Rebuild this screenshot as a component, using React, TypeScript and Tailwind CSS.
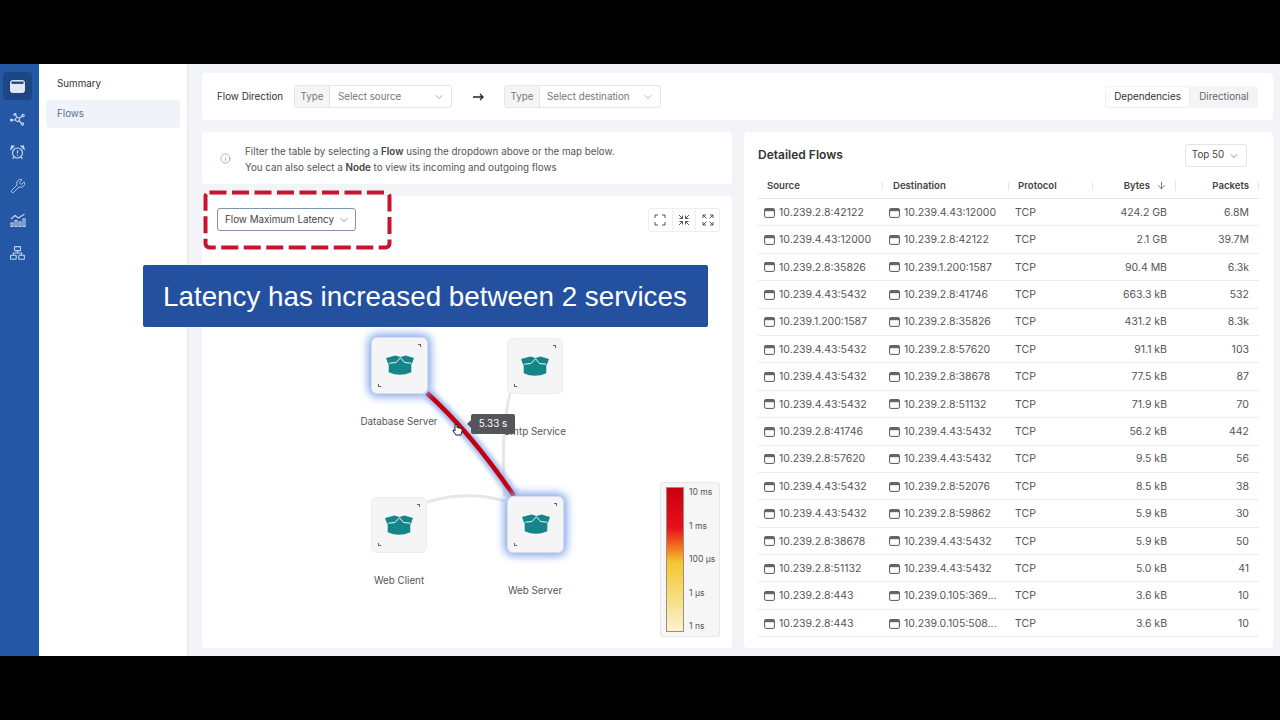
import React from "react";
import { ChevronDown, ArrowDown, Info, Wrench } from "lucide-react";

const rows: [string, string, string, string][] = [
  ["10.239.2.8:42122", "10.239.4.43:12000", "424.2 GB", "6.8M"],
  ["10.239.4.43:12000", "10.239.2.8:42122", "2.1 GB", "39.7M"],
  ["10.239.2.8:35826", "10.239.1.200:1587", "90.4 MB", "6.3k"],
  ["10.239.4.43:5432", "10.239.2.8:41746", "663.3 kB", "532"],
  ["10.239.1.200:1587", "10.239.2.8:35826", "431.2 kB", "8.3k"],
  ["10.239.4.43:5432", "10.239.2.8:57620", "91.1 kB", "103"],
  ["10.239.4.43:5432", "10.239.2.8:38678", "77.5 kB", "87"],
  ["10.239.4.43:5432", "10.239.2.8:51132", "71.9 kB", "70"],
  ["10.239.2.8:41746", "10.239.4.43:5432", "56.2 kB", "442"],
  ["10.239.2.8:57620", "10.239.4.43:5432", "9.5 kB", "56"],
  ["10.239.4.43:5432", "10.239.2.8:52076", "8.5 kB", "38"],
  ["10.239.4.43:5432", "10.239.2.8:59862", "5.9 kB", "30"],
  ["10.239.2.8:38678", "10.239.4.43:5432", "5.9 kB", "50"],
  ["10.239.2.8:51132", "10.239.4.43:5432", "5.0 kB", "41"],
  ["10.239.2.8:443", "10.239.0.105:369...", "3.6 kB", "10"],
  ["10.239.2.8:443", "10.239.0.105:508...", "3.6 kB", "10"],
];

function WinIcon() {
  return (
    <svg width="11" height="10" viewBox="0 0 11 10" fill="none" className="shrink-0">
      <rect x="0.6" y="0.6" width="9.8" height="8.8" rx="1.2" stroke="#555" strokeWidth="1" />
      <rect x="0.6" y="0.6" width="9.8" height="2.6" fill="#666" />
    </svg>
  );
}

function Box() {
  return (
    <svg width="28" height="21" viewBox="0 0 28 21">
      <path d="M0 3 L9.5 0.5 L14.5 2 L19.5 0.5 L28 3 L26 8.5 L25.3 8.8 V17.2 Q14 22.5 2.7 17.2 V8.8 L2 8.5 Z" fill="#14868a" />
      <path d="M3.3 8.2 L10 7.5 L14.5 2.7 L18.5 7.5 L25 8.2" fill="none" stroke="#f5f5f7" strokeWidth="1" />
    </svg>
  );
}

function Node({ x, y, w, label, lx, ly, active }: { x: number; y: number; w: number; label: string; lx: number; ly: number; active?: boolean }) {
  return (
    <>
      <div
        className={
          active
            ? "absolute flex items-center justify-center rounded-md bg-[#f5f5f7] border border-[#d5dcec] shadow-[0_0_8px_3px_#86a8e8]"
            : "absolute flex items-center justify-center rounded-md bg-[#f5f5f7] border border-[#ececee]"
        }
        style={{ left: x, top: y, width: w, height: w }}
      >
        <Box />
        <span className="absolute right-[6px] top-[6px] w-[3px] h-[3px] border-t border-r border-[#666]" />
        <span className="absolute left-[6px] bottom-[6px] w-[3px] h-[3px] border-b border-l border-[#666]" />
      </div>
      <div className="absolute text-[9.8px] leading-[14px] text-[#555] whitespace-nowrap -translate-x-1/2" style={{ left: lx, top: ly }}>
        {label}
      </div>
    </>
  );
}

function ActionIcon({ kind }: { kind: number }) {
  const paths = [
    "M1 4V1H4M8 1H11V4M11 8V11H8M4 11H1V8",
    "M1 1L4.5 4.5M4.5 1.5V4.5H1.5M11 1L7.5 4.5M7.5 1.5V4.5H10.5M1 11L4.5 7.5M4.5 10.5V7.5H1.5M11 11L7.5 7.5M7.5 10.5V7.5H10.5",
    "M4.5 4.5L1 1M1 4V1H4M7.5 4.5L11 1M8 1H11V4M4.5 7.5L1 11M1 8V11H4M7.5 7.5L11 11M8 11H11V8",
  ];
  return (
    <svg width="12" height="12" viewBox="0 0 12 12" fill="none" stroke="#555" strokeWidth="1">
      <path d={paths[kind]} />
    </svg>
  );
}

function SideIcon({ children, active }: { children: React.ReactNode; active?: boolean }) {
  return (
    <div className={active ? "ml-[3px] w-[29px] h-[28px] rounded bg-[#1d4684] flex items-center justify-center" : "ml-[3px] w-[29px] h-[28px] flex items-center justify-center"}>
      {children}
    </div>
  );
}

const rowStyle = "flex items-center h-[27.4px] pt-[1px] border-b border-[#e9ebef] text-[10.5px] text-[#555]";
const ICON = "#c3d4f2";

export default function App() {
  return (
    <div className="h-[720px] w-[1280px] bg-black pt-[64px] overflow-hidden" style={{ fontFamily: "Inter, 'Noto Sans', sans-serif" }}>
      <div className="relative h-[592px] flex bg-[#f3f4f7]">
        <aside className="w-[39px] bg-[#2558a4] flex flex-col pt-[8px] gap-[5.4px] shrink-0">
          <SideIcon active>
            <svg width="15" height="13" viewBox="0 0 15 13">
              <rect x="0.7" y="0.7" width="13.6" height="11.6" rx="1.5" fill="#dfe8f7" stroke="#fff" strokeWidth="1" />
              <rect x="1.5" y="1.5" width="12" height="2.4" fill="#1d4684" />
            </svg>
          </SideIcon>
          <SideIcon>
            <svg width="15" height="13" viewBox="0 0 15 13" fill="none" stroke={ICON} strokeWidth="1.2">
              <circle cx="7.5" cy="6.5" r="2" />
              <circle cx="1.5" cy="7" r="1" fill={ICON} />
              <circle cx="5" cy="1.5" r="1" />
              <circle cx="13" cy="2.5" r="1.2" />
              <circle cx="12.5" cy="11" r="1.2" />
              <path d="M2.5 7H5.5M6 2.5L7 4.5M9.2 5.3L12 3.3M9 8L11.5 10.2" />
            </svg>
          </SideIcon>
          <SideIcon>
            <svg width="15" height="15" viewBox="0 0 15 15" fill="none" stroke={ICON} strokeWidth="1.2">
              <circle cx="7.5" cy="8" r="5" />
              <path d="M7.5 5.2V8.6M7.5 9.8V10.8" />
              <path d="M1 4L3.8 1.2L1.6 0.9ZM14 4L11.2 1.2L13.4 0.9Z" />
              <path d="M3.8 12L2.6 14M11.2 12L12.4 14" />
            </svg>
          </SideIcon>
          <SideIcon><Wrench size={16} color={ICON} strokeWidth={1.3} /></SideIcon>
          <SideIcon>
            <svg width="16" height="14" viewBox="0 0 16 14" fill="none" stroke={ICON} strokeWidth="1.1">
              <path d="M1 6L5 2.5L8.5 5L14.5 1" />
              <rect x="1" y="10" width="2" height="3.5" />
              <rect x="5" y="7.5" width="2" height="6" />
              <rect x="9" y="9" width="2" height="4.5" />
              <rect x="13" y="6" width="2" height="7.5" />
            </svg>
          </SideIcon>
          <SideIcon>
            <svg width="15" height="14" viewBox="0 0 15 14" fill="none" stroke={ICON} strokeWidth="1.1">
              <rect x="4.5" y="0.6" width="6" height="4" rx="0.5" />
              <rect x="0.6" y="9.2" width="5.6" height="4" rx="0.5" />
              <rect x="8.8" y="9.2" width="5.6" height="4" rx="0.5" />
              <path d="M7.5 4.6V7H3.4V9.2M7.5 7H11.6V9.2" />
            </svg>
          </SideIcon>
        </aside>

        <nav className="w-[149px] bg-white border-r border-[#e6e8ec] px-[7px] shrink-0 text-[9.8px]">
          <div className="h-[36px] flex items-center pl-[11px] pt-[5px] text-[#333]">Summary</div>
          <div className="h-[28px] flex items-center pl-[11px] rounded bg-[#f0f3fa] text-[#5c7091]">Flows</div>
        </nav>

        <main className="w-[1086px] pl-[14px] pt-[9px] flex flex-col gap-[12px]">
          <div className="h-[47px] w-[1071px] bg-white flex items-center pl-[15px] pr-[15px] text-[9.8px] rounded-sm shrink-0">
            <span className="text-[#333] w-[77px] pt-[2px]">Flow Direction</span>
            <div className="flex h-[23px] w-[158px] rounded-[3px] border border-[#e3e5ea] text-[#777]">
              <span className="w-[35px] pt-[2px] bg-[#f5f5f7] border-r border-[#e3e5ea] flex items-center justify-center">Type</span>
              <span className="flex-1 flex items-center justify-between pl-[8px] pr-[6px]"><span className="pt-[1px]">Select source</span> <ChevronDown size={12} strokeWidth={1.2} /></span>
            </div>
            <svg className="ml-[21px]" width="11" height="8" viewBox="0 0 11 8" fill="none" stroke="#222" strokeWidth="1.3"><path d="M0 4H10M7 1L10 4L7 7" /></svg>
            <div className="ml-[20px] flex h-[23px] w-[157px] rounded-[3px] border border-[#e3e5ea] text-[#777]">
              <span className="w-[35px] pt-[2px] bg-[#f5f5f7] border-r border-[#e3e5ea] flex items-center justify-center">Type</span>
              <span className="flex-1 flex items-center justify-between pl-[7px] pr-[6px]"><span className="pt-[1px]">Select destination</span> <ChevronDown size={12} strokeWidth={1.2} /></span>
            </div>
            <div className="ml-auto flex h-[22px] bg-[#f3f4f6] rounded-[3px]">
              <span className="w-[85px] pt-[1px] bg-white border border-[#f0f1f3] rounded-[3px] flex items-center justify-center text-[#333]">Dependencies</span>
              <span className="w-[68px] pt-[1px] flex items-center justify-center text-[#666]">Directional</span>
            </div>
          </div>

          <div className="flex gap-[12px] flex-1 pb-[8px] min-h-0">
            <div className="w-[530px] flex flex-col gap-[12px]">
              <div className="h-[52px] bg-white rounded-sm flex items-center pl-[18px] text-[9.8px] leading-[16px] text-[#555] shrink-0">
                <Info size={11} color="#5a7fb5" strokeWidth={1.2} className="shrink-0" />
                <div className="ml-[14px] pt-[3px]">
                  <div>Filter the table by selecting a <b className="font-semibold text-[#444]">Flow</b> using the dropdown above or the map below.</div>
                  <div>You can also select a <b className="font-semibold text-[#444]">Node</b> to view its incoming and outgoing flows</div>
                </div>
              </div>

              <div className="relative flex-1 bg-white rounded-sm">
                <div className="absolute left-[15px] top-[12px] w-[139px] h-[23px] rounded-[3px] border border-[#7f93ad] flex items-center justify-between pl-[7px] pr-[5px] text-[9.8px] text-[#444] whitespace-nowrap">
                  <span className="pt-[1px]">Flow Maximum Latency</span> <ChevronDown size={12} strokeWidth={1.2} />
                </div>
                <div className="absolute left-[446px] top-[12px] h-[24px] w-[72px] flex border border-[#eceef1] rounded-[3px]">
                  <span className="flex-1 flex items-center justify-center border-r border-[#eceef1]"><ActionIcon kind={0} /></span>
                  <span className="flex-1 flex items-center justify-center border-r border-[#eceef1]"><ActionIcon kind={1} /></span>
                  <span className="flex-1 flex items-center justify-center"><ActionIcon kind={2} /></span>
                </div>

                <svg className="absolute left-0 top-0" width="530" height="452" fill="none">
                  <path d="M308 197 Q 298 240 303 300" stroke="#e6e6e6" strokeWidth="3" />
                  <path d="M225 306 Q 265 294 303 305" stroke="#e6e6e6" strokeWidth="3" />
                  <path className="blur-[2px]" d="M225 197 Q 270 238 312 300" stroke="#7ea3ec" strokeWidth="11" opacity="0.7" />
                  <path d="M225 197 Q 270 238 312 300" stroke="#c4000f" strokeWidth="4.5" />
                </svg>

                <Node x={169} y={141} w={57} label="Database Server" lx={197} ly={219} active />
                <Node x={305} y={142} w={56} label="Smtp Service" lx={333} ly={229} />
                <Node x={169} y={301} w={56} label="Web Client" lx={197} ly={378} />
                <Node x={305} y={300} w={57} label="Web Server" lx={333} ly={388} active />

                <div className="absolute left-[269px] top-[218px] w-[44px] h-[20px] rounded-[2px] bg-[#55565a] text-white text-[9.8px] flex items-center justify-center">5.33 s</div>
                <div className="absolute left-[265px] top-[224px] w-0 h-0 border-y-[4px] border-y-transparent border-r-[4px] border-r-[#55565a]" />
                <svg className="absolute left-[250px] top-[227px]" width="11" height="13" viewBox="0 0 11 13">
                  <path d="M3 1.5V8L1.5 6.8L1 8L4 12H9L10 8V5.5L5 4.5V1.5Z" fill="#fff" stroke="#222" strokeWidth="1" />
                </svg>

                <div className="absolute left-[458px] top-[286px] w-[60px] h-[155px] rounded-[3px] border border-[#e6e7ea] bg-[#f6f6f7] flex pl-[5px] py-[4px] text-[8.6px] text-[#555]">
                  <div className="w-[18px] border border-[#9a8f80] bg-[linear-gradient(to_bottom,#c90012_0%,#e8101a_28%,#f26a1e_40%,#f5c62f_52%,#f7dc7a_75%,#fbf3cf_100%)]" />
                  <div className="ml-[5px] flex flex-col justify-between leading-[11px] whitespace-nowrap">
                    <span>10 ms</span><span>1 ms</span><span>100 µs</span><span>1 µs</span><span>1 ns</span>
                  </div>
                </div>
              </div>
            </div>

            <div className="w-[529px] bg-white rounded-sm px-[14px]">
              <div className="h-[46px] flex items-center justify-between pr-[12px]">
                <span className="text-[12px] font-semibold text-[#333]">Detailed Flows</span>
                <span className="w-[62px] h-[23px] pt-[1px] border border-[#e3e5ea] rounded-[3px] flex items-center justify-center gap-[4px] text-[9.8px] text-[#444]">Top 50 <ChevronDown size={12} strokeWidth={1.2} /></span>
              </div>
              <div className="w-[501px]">
                <div className="flex items-center h-[21px] pb-[5px] border-b border-[#e4e6ea] text-[9.6px] font-semibold text-[#444]">
                  <span className="w-[125px] pl-[9px] border-r border-[#e4e6ea] leading-[8px]">Source</span>
                  <span className="w-[126px] pl-[10px] border-r border-[#e4e6ea] leading-[8px]">Destination</span>
                  <span className="w-[84px] pl-[9px] border-r border-[#e4e6ea] leading-[8px]">Protocol</span>
                  <span className="w-[83px] pr-[8px] border-r border-[#e4e6ea] leading-[8px] flex justify-end items-center gap-[6px]">Bytes <ArrowDown size={11} strokeWidth={1.5} /></span>
                  <span className="w-[83px] pr-[9px] border-r border-[#e4e6ea] leading-[8px] text-right">Packets</span>
                </div>
                {rows.map((r, i) => (
                  <div key={i} className={rowStyle}>
                    <span className="w-[125px] pl-[6px] flex items-center gap-[4px] whitespace-nowrap"><WinIcon />{r[0]}</span>
                    <span className="w-[126px] pl-[6px] flex items-center gap-[4px] whitespace-nowrap"><WinIcon />{r[1]}</span>
                    <span className="w-[84px] pl-[6px]">TCP</span>
                    <span className="w-[83px] pr-[9px] text-right">{r[2]}</span>
                    <span className="w-[83px] pr-[10px] text-right">{r[3]}</span>
                  </div>
                ))}
              </div>
            </div>
          </div>
        </main>

        <svg className="absolute left-[203px] top-[126px]" width="189" height="60" fill="none">
          <rect x="2.5" y="2.5" width="184" height="55" rx="4" stroke="#c8132e" strokeWidth="4" strokeDasharray="17 5.5" />
        </svg>
        <div className="absolute left-[143px] top-[201px] w-[565px] h-[62px] pt-[2px] bg-[#24519f] rounded-[2px] text-white text-[27.8px] flex items-center pl-[20px] whitespace-nowrap" style={{ fontFamily: "'Liberation Sans', sans-serif" }}>
          Latency has increased between 2 services
        </div>
      </div>
    </div>
  );
}
